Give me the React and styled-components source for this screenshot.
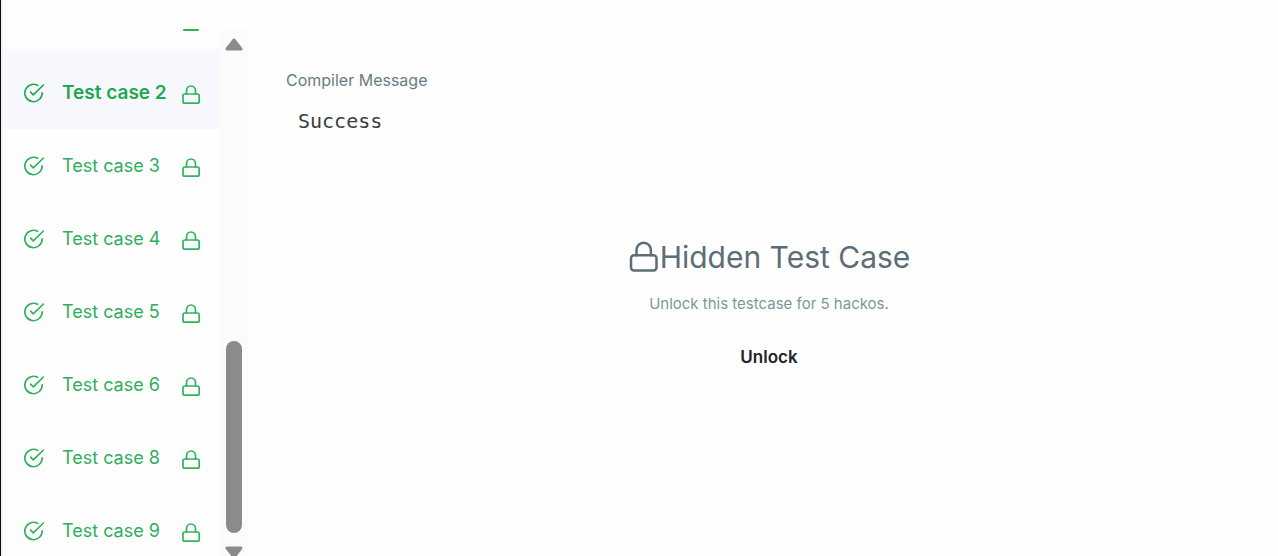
import React from "react";
import styled, { createGlobalStyle, css } from "styled-components";

const GlobalStyle = createGlobalStyle`
  *, *::before, *::after { box-sizing: border-box; }
  body {
    margin: 0;
    background: #fefefe;
    font-family: Inter, "Liberation Sans", sans-serif;
  }
`;

const Page = styled.div`
  display: flex;
  height: 100vh;
  padding-top: 29px;
  overflow: hidden;
  border-left: 1px solid #0b0a1c;
  box-shadow: inset 2px 0 0 #f3f1fa;
`;

const Sidebar = styled.nav`
  flex: 0 0 216px;
  margin-left: 3px;
  overflow: hidden;
`;

const PreviousRow = styled.div`
  display: flex;
  justify-content: flex-end;
  align-items: flex-end;
  height: 24px;
  padding: 0 19px 22px 0;
  background: linear-gradient(#fefefe 60%, #f9f9fc);
`;

const CaseButton = styled.button`
  display: flex;
  align-items: center;
  width: 100%;
  height: 73px;
  padding: 0 19px;
  border: 0;
  background: transparent;
  color: #2fae5c;
  font: 400 18px/24px Inter, "Liberation Sans", sans-serif;
  text-align: left;
  white-space: nowrap;
  cursor: pointer;
  ${(p) =>
    p.$active &&
    css`
      height: 76px;
      padding-top: 4px;
      background: #f6f8fd;
      color: #1fa84f;
      font-size: 19px;
      font-weight: 600;
    `}
`;

const CaseName = styled.span`
  flex: 1;
  margin-left: 17px;
`;

const Icon = styled.svg`
  flex: none;
  display: block;
  fill: none;
  stroke: currentColor;
  stroke-linecap: round;
  stroke-linejoin: round;
`;

const CaseLock = styled(Icon)`
  margin-top: 4px;
  color: #2fb45d;
`;

const Scrollbar = styled.div`
  flex: 0 0 28px;
  display: flex;
  flex-direction: column;
  align-items: center;
  padding-top: 8px;
  background: #fbfbfb;
`;

const Track = styled.div`
  flex: none;
  display: flex;
  flex-direction: column;
  justify-content: flex-end;
  height: calc(100vh - 75px);
  margin-bottom: 12px;
`;

const Thumb = styled.div`
  width: 16px;
  height: 192px;
  border-radius: 8px;
  background: #8b8b8b;
`;

const Arrow = styled.svg`
  flex: none;
  display: block;
  fill: #8b8b8b;
  stroke: #8b8b8b;
  stroke-width: 3;
  stroke-linejoin: round;
`;

const Result = styled.main`
  flex: 1;
  min-width: 0;
  padding: 40px 26px 0 38px;
`;

const Label = styled.h2`
  margin: 0;
  color: #6b7b84;
  font-size: 16px;
  font-weight: 400;
  line-height: 22px;
`;

const Output = styled.pre`
  margin: 18px 0 0 12px;
  color: #3a3c40;
  font: 20px/24px "DejaVu Sans Mono", monospace;
`;

const Hidden = styled.section`
  display: flex;
  flex-direction: column;
  align-items: center;
  margin-top: 104px;
`;

const Title = styled.h1`
  display: flex;
  align-items: center;
  margin: 0;
  color: #5c6d77;
  font-size: 30px;
  font-weight: 400;
  line-height: 40px;
  white-space: nowrap;
`;

const Hint = styled.p`
  margin: 17px 0 0;
  color: #7c979b;
  font-size: 15px;
  line-height: 20px;
`;

const UnlockButton = styled.button`
  margin-top: 31px;
  padding: 0;
  border: 0;
  background: transparent;
  color: #20242a;
  font: 600 17px/24px Inter, "Liberation Sans", sans-serif;
  cursor: pointer;
`;

const CheckIcon = () => (
  <Icon width="22" height="22" viewBox="0 0 22 22" strokeWidth="1.6" aria-hidden="true">
    <path d="M14.6 3.3A8.7 8.7 0 1 0 19.2 10.8" />
    <path d="M7.6 10.1l2.7 2.8L20.4 3" />
  </Icon>
);

const SmallLock = () => (
  <CaseLock width="20" height="20" viewBox="0 0 20 20" strokeWidth="1.7" aria-hidden="true">
    <rect x="2" y="9" width="16.2" height="9.2" rx="1.8" />
    <path d="M5.5 9V5.8a4.5 4.8 0 0 1 9 0V9" />
  </CaseLock>
);

const LargeLock = () => (
  <Icon width="32" height="32" viewBox="0 0 32 32" strokeWidth="2.5" aria-hidden="true">
    <rect x="3" y="14.2" width="25.5" height="15.4" rx="3" />
    <path d="M8.5 14.2V9.2a7.2 7.5 0 0 1 14.4 0v5" />
  </Icon>
);

const cases = [2, 3, 4, 5, 6, 8, 9];

export default function App() {
  return (
    <>
      <GlobalStyle />
      <Page>
        <Sidebar aria-label="Test cases">
          <PreviousRow>
            <Icon width="20" height="2" viewBox="0 0 20 2" strokeWidth="2" color="#2fb45d" aria-hidden="true">
              <path d="M3 1h14" />
            </Icon>
          </PreviousRow>
          {cases.map((n) => (
            <CaseButton key={n} type="button" $active={n === 2} aria-current={n === 2 ? "true" : undefined}>
              <CheckIcon />
              <CaseName>Test case {n}</CaseName>
              <SmallLock />
            </CaseButton>
          ))}
        </Sidebar>
        <Scrollbar aria-hidden="true">
          <Arrow width="20" height="15" viewBox="0 0 20 15">
            <path d="M10 3l7 9h-14z" />
          </Arrow>
          <Track>
            <Thumb />
          </Track>
          <Arrow width="20" height="15" viewBox="0 0 20 15">
            <path d="M3 3h14l-7 9z" />
          </Arrow>
        </Scrollbar>
        <Result>
          <Label>Compiler Message</Label>
          <Output>Success</Output>
          <Hidden>
            <Title>
              <LargeLock />
              Hidden Test Case
            </Title>
            <Hint>Unlock this testcase for 5 hackos.</Hint>
            <UnlockButton type="button">Unlock</UnlockButton>
          </Hidden>
        </Result>
      </Page>
    </>
  );
}
